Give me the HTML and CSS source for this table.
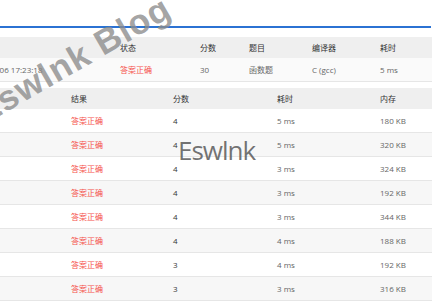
FILE: index.html
```html
<!DOCTYPE html>
<html lang="zh-CN">
<head>
<meta charset="utf-8">
<title>提交详情</title>
<link rel="stylesheet" href="styles.css">
</head>
<body>
<div class="page">
  <div class="top"></div>
  <div class="rule"></div>
  <div class="panel">
    <div class="clip">
      <table class="t1">
        <colgroup><col class="c1a"><col class="c1b"><col class="c1c"><col class="c1d"><col class="c1e"><col class="c1f"></colgroup>
        <thead>
          <tr><th></th><th>状态</th><th>分数</th><th>题目</th><th>编译器</th><th>耗时</th></tr>
        </thead>
        <tbody>
          <tr><td class="time">2020-05-06 17:23:18</td><td class="ok">答案正确</td><td>30</td><td>函数题</td><td>C (gcc)</td><td>5 ms</td></tr>
        </tbody>
      </table>
    </div>
    <div class="clip second">
      <table class="t2">
        <colgroup><col class="c2a"><col class="c2b"><col class="c2c"><col class="c2d"><col class="c2e"></colgroup>
        <thead>
          <tr><th></th><th>结果</th><th>分数</th><th>耗时</th><th>内存</th></tr>
        </thead>
        <tbody>
          <tr><td></td><td class="ok">答案正确</td><td class="sc">4</td><td>5 ms</td><td>180 KB</td></tr>
          <tr><td></td><td class="ok">答案正确</td><td class="sc">4</td><td>5 ms</td><td>320 KB</td></tr>
          <tr><td></td><td class="ok">答案正确</td><td class="sc">4</td><td>3 ms</td><td>324 KB</td></tr>
          <tr><td></td><td class="ok">答案正确</td><td class="sc">4</td><td>3 ms</td><td>192 KB</td></tr>
          <tr><td></td><td class="ok">答案正确</td><td class="sc">4</td><td>3 ms</td><td>344 KB</td></tr>
          <tr><td></td><td class="ok">答案正确</td><td class="sc">4</td><td>4 ms</td><td>188 KB</td></tr>
          <tr><td></td><td class="ok">答案正确</td><td class="sc">3</td><td>4 ms</td><td>192 KB</td></tr>
          <tr><td></td><td class="ok">答案正确</td><td class="sc">3</td><td>3 ms</td><td>316 KB</td></tr>
        </tbody>
      </table>
    </div>
  </div>
  <div class="wm-blog">Eswlnk Blog</div>
  <div class="wm-name">Eswlnk</div>
</div>
</body>
</html>
```

FILE: styles.css
```css
html, body {
  margin: 0;
  padding: 0;
  background: #ffffff;
}
body {
  font-family: "Open Sans", "Noto Sans CJK SC", sans-serif;
  font-size: 8px;
  color: #666;
  overflow: hidden;
}
.page {
  position: relative;
  width: 433px;
  height: 305px;
  overflow: hidden;
}
.top {
  height: 26px;
}
.rule {
  height: 2px;
  background: #2b72d3;
  margin-right: 2px;
}
.panel {
  padding-top: 9px;
  width: 432px;
}
.clip {
  overflow: hidden;
  width: 432px;
}
.second {
  margin-top: 6px;
}
table {
  border-collapse: collapse;
  table-layout: fixed;
}
th, td {
  padding: 0 8px;
  text-align: left;
  vertical-align: middle;
  white-space: nowrap;
  overflow: hidden;
}
th {
  height: 21px;
  background: #efefef;
  color: #333;
  font-weight: normal;
  font-family: "Noto Sans CJK SC", sans-serif;
}
td {
  height: 23px;
  border-bottom: 1px solid #e6e6e6;
}
.t1 {
  margin-left: -41px;
  width: 508px;
}
.t1 td {
  background: #fafafa;
}
.t1 td.time {
  overflow: visible;
}
.c1a { width: 153px; }
.c1b { width: 80px; }
.c1c { width: 49px; }
.c1d { width: 63px; }
.c1e { width: 68px; }
.c1f { width: 95px; }
.t2 {
  margin-left: -40px;
  width: 512px;
}
.c2a { width: 103px; }
.c2b { width: 102px; }
.c2c { width: 104px; }
.c2d { width: 103px; }
.c2e { width: 100px; }
.t2 tbody tr:nth-child(even) td {
  background: #f7f7f7;
}
.ok {
  color: #f5514a;
  font-family: "Noto Sans CJK SC", sans-serif;
}
.sc {
  color: #333;
}
.wm-blog {
  position: absolute;
  left: -16px;
  top: 95px;
  font-family: "Liberation Sans", Arial, sans-serif;
  font-weight: bold;
  font-size: 35px;
  letter-spacing: 1px;
  line-height: 1;
  color: rgba(140, 140, 140, 0.8);
  white-space: nowrap;
  transform: rotate(-30deg);
  transform-origin: 0 30px;
}
.wm-name {
  position: absolute;
  left: 178px;
  top: 137px;
  font-family: "Open Sans", sans-serif;
  font-size: 26px;
  letter-spacing: -1px;
  line-height: 1;
  color: rgba(90, 90, 90, 0.85);
  white-space: nowrap;
}
```
